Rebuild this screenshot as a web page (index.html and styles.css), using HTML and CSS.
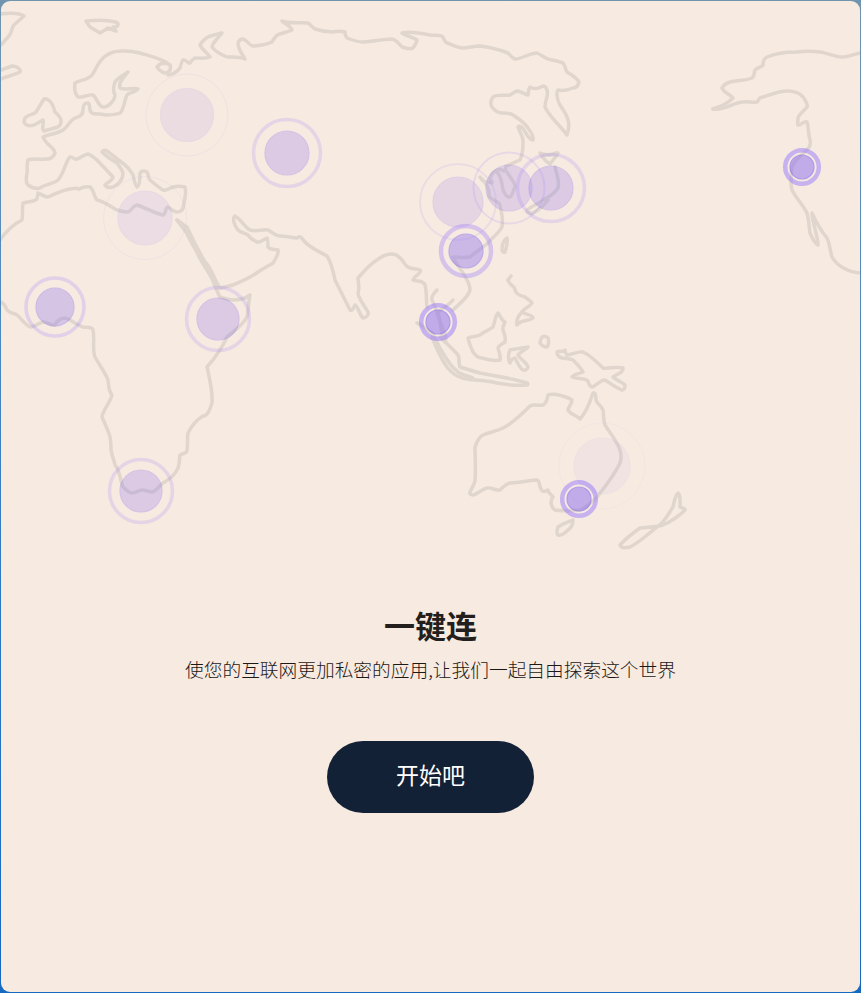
FILE: index.html
```html
<!DOCTYPE html>
<html lang="zh-CN">
<head>
<meta charset="utf-8">
<title>一键连</title>
<link rel="stylesheet" href="styles.css">
</head>
<body>
<main class="window">
  <svg class="map" viewBox="1 1 859 560" width="859" height="560" aria-hidden="true">
    <g class="land">
      <path d="M0 14C8 13 18 12 24 16L14 25C11 28 12 33 9 36L1 45"/>
      <path d="M1 70L12 66C18 66 21 70 20 72C14 75 8 76 1 79"/>
      <path d="M86 21C96 20 108 20 116 22C120 24 118 27 113 27L116 31L108 28L100 33L90 27Z"/>
      <path d="M25 118C30 113 34 115 36 112L44 99C48 98 52 103 53 106L55 112C62 118 63 123 58 127L44 131C41 130 44 125 43 120L36 124C28 128 22 124 25 118Z"/>
      <path d="M170 65C164 59 150 56 140 53C128 50 114 50 107 55C98 60 96 70 92 75C88 80 80 80 75 83C74 90 76 95 78 97C84 98 88 94 93 95C97 98 98 106 103 107C108 108 115 100 115 95C112 90 114 85 115 82C118 77 124 75 128 72C124 77 118 82 120 88C125 91 132 87 138 89C135 93 129 92 127 95C124 101 124 110 120 113C115 115 110 115 105 115C100 113 95 115 92 113C88 111 91 104 88 103C84 103 83 105 83 110C83 115 80 117 75 118C70 120 68 127 63 130C57 134 50 134 43 137C46 145 54 147 55 153C53 158 50 159 47 159C40 160 34 158 28 160C26 165 28 170 27 173C26 178 26 183 28 185C32 188 36 189 40 188C46 184 53 184 58 180C64 174 66 160 70 157C72 156 74 160 77 159C81 158 85 154 88 154C92 155 94 158 97 160L113 177C112 181 108 182 105 185C107 188 110 188 113 187C118 185 123 180 123 173C122 169 119 166 117 163C112 160 106 156 102 152C103 150 105 150 107 151L125 165C129 168 131 172 133 175C134 180 135 185 137 187C140 186 140 178 140 173C141 171 145 170 147 172C149 175 148 178 150 180C155 184 159 188 163 190C167 191 170 188 173 187C177 186 181 186 185 187C187 195 184 201 183 208C182 211 180 212 177 212C173 212 172 209 168 207C165 208 166 214 163 215C154 213 146 208 137 205C132 206 132 211 128 212C124 212 120 211 117 210C110 206 103 201 97 200C94 197 93 188 90 187C85 186 81 188 79 189C76 187 72 189 70 189C62 190 55 194 48 197C44 197 41 194 38 193C37 198 38 200 33 201C27 202 24 203 23 203C22 208 23 214 22 220C14 224 7 230 0 240"/>
      <path d="M1 302C5 304 6 308 7 310C11 314 14 313 17 315C22 319 25 325 30 327C35 327 40 322 43 322C48 322 52 326 55 325C57 320 62 318 65 318C70 319 77 325 83 327C88 327 92 327 93 330C95 338 92 350 95 357C100 366 105 372 108 380C109 386 108 390 112 395C110 403 103 410 102 417C105 424 108 430 110 437C111 442 111 446 111 450C112 456 114 460 115 465C120 470 120 480 123 487C127 491 130 493 132 493C136 493 139 490 142 490C146 490 149 492 152 492C156 491 159 486 163 483C170 479 175 474 177 470C180 466 179 459 180 455C185 453 187 453 187 450C188 444 187 438 188 433C192 425 198 419 203 416C207 416 209 412 212 403C213 392 210 380 207 367C215 358 222 348 227 337C235 330 243 325 247 317C249 308 248 303 250 295C246 298 240 300 233 300C228 300 224 298 220 297C216 290 214 282 210 275C204 265 199 258 198 254C193 246 188 236 186 232C183 227 179 224 177 220"/>
      <path d="M177 220C181 222 183 225 187 227C192 238 198 250 205 262C212 268 214 280 220 288C226 287 230 286 233 285C240 282 250 278 258 272C264 268 270 265 273 263C276 258 279 254 278 250C274 249 270 250 268 247C268 243 268 239 267 238C263 240 260 243 257 242C253 240 250 238 248 235C244 233 240 232 238 230C234 225 232 218 235 216C241 219 245 228 250 230C258 232 262 229 268 230C272 232 276 236 280 236C285 236 293 238 297 238C300 235 302 238 304 241C310 248 320 252 327 256C331 262 333 270 335 280C340 290 345 300 350 310C352 312 354 307 355 305C358 306 360 316 363 318C366 318 369 315 368 312C364 305 358 298 358 293C360 288 358 282 358 278C365 270 370 264 377 260C383 255 388 254 392 254C396 254 398 256 400 258C404 261 405 266 408 267C412 270 417 268 420 270C423 272 413 277 413 280C418 282 423 280 425 285C427 292 426 300 427 307"/>
      <path d="M417 323C423 325 427 331 431 332C436 337 437 344 441 350C448 362 452 368 458 372C462 375 468 376 473 378"/>
      <path d="M157 67C160 63 164 62 170 65C172 70 168 73 165 73C161 72 159 70 157 67Z"/>
      <path d="M168 75C174 74 178 71 180 68C181 64 182 60 183 60C186 59 188 64 190 63C191 61 193 59 195 58C200 58 205 59 210 57C207 52 202 50 200 45C202 41 205 39 208 37C212 35 218 34 222 33C218 38 213 42 212 47C215 51 222 55 227 57C232 57 238 56 245 59C243 55 238 50 238 43C239 40 241 39 243 39C247 40 250 46 253 46C258 46 265 45 272 42C274 38 276 37 277 35C282 33 288 32 292 30C291 26 285 24 282 21C290 24 300 22 308 23C311 25 313 28 315 29C321 31 327 32 333 32C337 31 341 31 345 32C345 34 345 36 347 38C352 40 358 42 363 42C372 42 382 39 392 39C397 40 400 45 402 47C406 48 410 50 413 48C415 45 417 42 417 40C413 37 406 36 402 33C410 31 420 33 430 35C434 36 440 34 443 37C444 40 445 42 447 43C453 45 458 48 463 48C468 48 474 46 480 46C490 47 500 50 508 53C510 55 512 58 515 59C522 59 530 53 537 53C542 55 546 59 552 60C557 61 561 62 563 63C566 66 565 70 567 72C572 75 577 78 579 82C578 86 576 88 573 88C568 90 563 91 558 90C556 92 557 100 560 105C564 111 567 115 568 120C570 126 568 132 567 135C562 127 550 118 545 107C545 100 549 95 547 90C546 87 544 86 543 86C539 88 535 90 530 87C528 89 529 92 528 95C524 94 520 91 517 91C514 92 512 94 510 95C504 96 498 94 493 97C491 100 490 104 492 107C495 111 498 113 502 113C506 113 510 113 513 115C519 119 524 122 528 128C531 132 534 136 533 140C528 139 526 133 524 130C522 127 519 125 518 127C520 133 524 137 523 143C523 150 522 156 520 160C515 162 510 165 506 166C506 170 504 172 502 170C498 168 492 172 490 178C492 182 495 184 487 182C485 182 483 182 480 177C486 182 490 190 489 196C492 200 497 202 499 203C502 212 503 220 502 227C498 234 492 238 488 243C482 248 476 252 470 257C465 258 458 257 453 257C456 264 460 268 463 273C467 279 470 284 470 290C468 298 460 303 453 310"/>
      <path d="M497 172C500 175 502 182 503 190C505 195 508 198 510 197C513 195 513 190 515 187C516 183 510 178 507 172"/>
      <path d="M540 153C543 155 546 154 549 155C552 155 556 152 558 153C556 157 553 160 550 164C546 162 543 158 540 153Z"/>
      <path d="M555 167C557 175 560 182 558 188C555 193 549 197 543 200C538 204 532 206 527 210C526 212 530 214 533 213C539 210 545 204 548 200"/>
      <path d="M507 238C508 243 506 248 505 252C503 253 502 251 502 249C502 245 503 241 507 238Z"/>
      <path d="M437 290C434 293 431 297 432 300C436 308 438 316 440 322C441 330 443 338 445 342C446 340 447 336 443 330C441 325 439 318 438 312C443 308 449 305 453 300"/>
      <path d="M508 280C509 285 515 286 515 290C516 295 522 296 525 297C529 300 532 302 532 303C530 307 524 308 522 312C525 315 532 314 533 318C528 322 522 319 517 325C516 320 518 316 522 312"/>
      <path d="M508 280L511 276"/>
      <path d="M432 337C437 350 442 360 447 367C451 372 455 376 460 377C466 381 480 379 497 383C508 385 518 386 527 385C528 385 528 383 527 383C512 378 495 376 480 373C473 371 466 369 460 367C458 363 460 358 458 355C452 348 445 342 440 337"/>
      <path d="M468 338C472 336 476 337 480 335C484 331 488 331 493 327C495 322 495 316 498 313C500 315 501 320 505 322C504 325 502 328 503 330C505 335 506 338 505 342C502 344 498 346 498 348C499 352 501 356 500 360C494 361 488 360 482 358C478 358 475 355 473 352C471 348 469 343 468 338Z"/>
      <path d="M510 350C515 349 522 348 528 347C525 350 520 352 518 355C520 359 526 362 528 367C528 369 525 371 523 370C519 368 517 361 515 358C512 358 510 362 510 363C508 360 508 354 510 350Z"/>
      <path d="M542 337C544 336 547 336 548 338C549 341 549 344 547 347C545 347 542 346 540 343C540 341 541 339 542 337Z"/>
      <path d="M557 352C559 350 562 353 565 350C565 352 566 354 567 355C572 355 578 351 583 352C590 355 597 362 603 368C608 369 617 366 623 368C624 372 617 374 613 377C616 380 622 382 625 385C625 389 624 390 622 390C616 388 610 383 605 380C600 380 596 386 592 387C589 387 589 382 587 380C582 378 577 379 572 377C574 374 579 374 583 372C581 368 577 364 573 360C568 358 566 359 562 358C559 357 557 355 557 352Z"/>
      <path d="M470 492C472 487 475 484 475 480C476 470 475 458 475 447C477 441 479 437 483 435C490 432 497 431 503 428C513 423 522 414 530 406C534 404 539 406 543 405C547 403 547 399 548 395C554 393 566 396 572 400C572 404 568 407 568 410C571 415 578 416 580 419C585 414 590 402 593 393C595 392 596 395 596 400C597 404 601 405 603 410C604 415 603 420 605 425C610 433 617 441 620 450C622 456 621 460 620 463C614 476 604 488 597 497C591 503 586 508 580 510C572 511 562 511 555 510C552 508 549 502 553 497C551 495 548 492 548 490C545 492 542 492 541 489C539 486 540 481 537 480C530 480 520 483 510 483C506 484 503 487 500 490C496 491 491 487 487 488C482 489 478 494 473 495C471 495 469 494 470 492Z"/>
      <path d="M558 527C562 524 568 522 573 520C573 524 571 528 568 530C565 533 561 536 558 535C556 533 557 530 558 527Z"/>
      <path d="M678 493C681 495 680 503 680 507C682 508 685 508 685 510C678 517 670 522 663 525C656 527 648 527 640 528C633 533 626 538 620 545C621 548 626 548 630 547C640 542 649 533 657 527C664 523 669 513 673 507C674 502 675 496 678 493Z"/>
      <path d="M713 109C720 107 728 103 733 98C730 94 724 93 722 88C724 84 727 83 730 82C737 80 745 81 752 78C755 76 754 72 755 70C758 67 762 67 763 65C763 61 765 58 767 57C776 53 787 52 797 52C805 51 813 51 820 52C828 53 835 57 842 57C848 57 854 54 860 53"/>
      <path d="M713 109C718 110 722 108 727 107C732 105 738 102 743 102C748 101 753 103 757 102C758 101 759 99 760 98C770 95 778 91 787 91C794 91 800 93 803 97C806 101 808 104 807 107C804 111 799 114 798 118C798 121 797 124 798 125C801 126 804 120 807 122C809 128 808 134 810 140C811 144 809 148 807 150C801 155 794 160 792 167C791 174 790 182 792 190C796 198 803 205 807 213C809 220 809 227 810 233C812 238 815 243 818 245C819 240 812 222 812 213C816 222 822 232 827 238C830 244 830 251 832 257C837 266 848 272 860 273"/>
    </g>
    <g class="pin a10"><circle class="core" cx="187" cy="115" r="26.5"/><circle class="halo thin" cx="187" cy="115" r="41"/></g>
    <g class="pin a25"><circle class="core" cx="287" cy="153" r="22"/><circle class="halo" cx="287" cy="153" r="33.5"/></g>
    <g class="pin a10"><circle class="core" cx="145" cy="218" r="27"/><circle class="halo thin" cx="145" cy="218" r="41.5"/></g>
    <g class="pin a30"><circle class="core" cx="55" cy="307" r="19"/><circle class="halo" cx="55" cy="307" r="29"/></g>
    <g class="pin a25"><circle class="core" cx="218" cy="319" r="21"/><circle class="halo" cx="218" cy="319" r="31.5"/></g>
    <g class="pin a25"><circle class="core" cx="141" cy="491" r="21"/><circle class="halo" cx="141" cy="491" r="31.5"/></g>
    <g class="pin a16"><circle class="core" cx="458" cy="202" r="25"/><circle class="halo mid" cx="458" cy="202" r="38"/></g>
    <g class="pin a20"><circle class="core" cx="509" cy="188" r="23"/><circle class="halo mid" cx="509" cy="188" r="35.5"/></g>
    <g class="pin a25"><circle class="core" cx="551" cy="188" r="22"/><circle class="halo" cx="551" cy="188" r="33.5"/></g>
    <g class="pin a40"><circle class="core" cx="466" cy="251" r="17"/><circle class="halo wide" cx="466" cy="251" r="25"/></g>
    <g class="pin a50"><circle class="core" cx="802" cy="167" r="12"/><circle class="halo wide" cx="802" cy="167" r="16.8"/></g>
    <g class="pin a50"><circle class="core" cx="438" cy="322" r="12"/><circle class="halo wide" cx="438" cy="322" r="16.8"/></g>
    <g class="pin a50"><circle class="core" cx="579" cy="499" r="12"/><circle class="halo wide" cx="579" cy="499" r="16.8"/></g>
    <g class="pin a05"><circle class="core" cx="602" cy="466" r="28"/><circle class="halo thin" cx="602" cy="466" r="43"/></g>
  </svg>
  <section class="intro">
    <h1 class="title">一键连</h1>
    <p class="subtitle">使您的互联网更加私密的应用,让我们一起自由探索这个世界</p>
    <button class="start" type="button">开始吧</button>
  </section>
</main>
</body>
</html>
```

FILE: styles.css
```css
html, body {
  height: 100%;
  margin: 0;
}

body {
  display: flex;
  box-sizing: border-box;
  padding: 1px;
  overflow: hidden;
  background: linear-gradient(180deg, #7194ae 0%, #4f8ac0 30%, #2c78c4 60%, #1669c0 100%);
  font-family: "Noto Sans CJK SC", "Noto Sans", sans-serif;
}

.window {
  flex: 1;
  display: flex;
  flex-direction: column;
  align-items: center;
  overflow: hidden;
  border-radius: 9px;
  background: #f7eae1;
}

.map {
  display: block;
  flex: none;
}

.land path {
  fill: none;
  stroke: #e0d6cd;
  stroke-width: 3.5;
  stroke-linecap: round;
  stroke-linejoin: round;
}

.core {
  fill: #8d6eef;
  stroke: #6a4cf0;
  stroke-width: 1.2;
}

.halo {
  fill: none;
  stroke: #997afb;
  stroke-width: 3.5;
  stroke-opacity: 0.75;
}

.halo.wide {
  stroke-width: 4.5;
  stroke-opacity: 0.85;
}

.a50 .halo.wide {
  stroke-opacity: 1;
}

.halo.mid {
  stroke-width: 2;
}

.halo.thin {
  stroke-width: 1;
}

.a05 { opacity: 0.05; }
.a10 { opacity: 0.1; }
.a16 { opacity: 0.16; }
.a20 { opacity: 0.2; }
.a25 { opacity: 0.25; }
.a30 { opacity: 0.3; }
.a40 { opacity: 0.4; }
.a50 { opacity: 0.5; }

.intro {
  display: flex;
  flex-direction: column;
  align-items: center;
  padding-top: 44px;
}

.title {
  margin: 0;
  font-size: 31px;
  line-height: 40px;
  font-weight: 700;
  color: #231f1c;
}

.subtitle {
  margin: 11px 0 0;
  font-size: 18.72px;
  line-height: 26px;
  font-weight: 300;
  color: #1c1816;
}

.start {
  width: 207px;
  height: 72px;
  margin-top: 59px;
  padding: 0 0 7px;
  border: 0;
  border-radius: 36px;
  background: #132136;
  color: #ffffff;
  font-family: inherit;
  font-size: 23px;
  font-weight: 400;
}
```
